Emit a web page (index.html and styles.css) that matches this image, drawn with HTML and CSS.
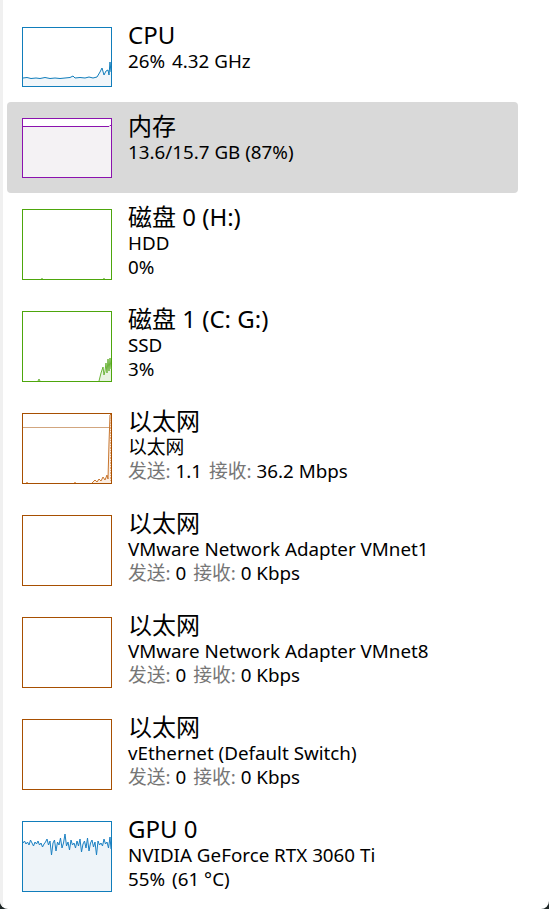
FILE: index.html
```html
<!DOCTYPE html>
<html lang="zh-CN">
<head>
<meta charset="utf-8">
<title>性能</title>
<link rel="stylesheet" href="styles.css">
</head>
<body>
<div class="window">
  <div class="edge"></div>
  <ul class="list">
    <li class="item">
      <svg class="graph short" viewBox="0 0 90 60" width="90" height="60">
        <rect x="0.5" y="0.5" width="89" height="59" fill="#fff" stroke="#117dbb"/>
        <polygon fill="#f1f6fa" points="1,51 5,50.5 9,51.5 14,51 18,51.5 23,50.5 28,51.5 33,51 38,51.5 43,51 48,50.5 51,49 53,51 58,50.5 63,51 67,50 71,51 75,50 78,45 80,41 82,48 84,44 86,43 87,48 88,35 89,45 89,59 1,59"/>
        <polyline fill="none" stroke="#117dbb" stroke-width="1" points="1,51 5,50.5 9,51.5 14,51 18,51.5 23,50.5 28,51.5 33,51 38,51.5 43,51 48,50.5 51,49 53,51 58,50.5 63,51 67,50 71,51 75,50 78,45 80,41 82,48 84,44 86,43 87,48 88,35 89,45"/>
      </svg>
      <div class="info">
        <div class="title">CPU</div>
        <div class="sub"><span class="v">26%</span><span class="v">4.32 GHz</span></div>
      </div>
    </li>
    <li class="item selected">
      <svg class="graph short" viewBox="0 0 90 60" width="90" height="60">
        <rect x="0.5" y="0.5" width="89" height="59" fill="#fff" stroke="#8b12ae"/>
        <rect x="1" y="8.5" width="88" height="50.5" fill="#f4f2f4"/>
        <polyline fill="none" stroke="#8b12ae" stroke-width="1" points="1,8.5 87,8.5 88,7.5 89,7.5"/>
      </svg>
      <div class="info">
        <div class="title">内存</div>
        <div class="sub">13.6/15.7 GB (87%)</div>
      </div>
    </li>
    <li class="item">
      <svg class="graph" viewBox="0 0 90 71" width="90" height="71">
        <rect x="0.5" y="0.5" width="89" height="70" fill="#fff" stroke="#4da60c"/>
        <polyline fill="none" stroke="#9ccd7a" stroke-width="1" points="19,70 20,69 21,70"/>
        <polyline fill="none" stroke="#9ccd7a" stroke-width="1" points="81,70 82,69 83,70"/>
      </svg>
      <div class="info">
        <div class="title">磁盘 0 (H:)</div>
        <div class="sub">HDD</div>
        <div class="sub">0%</div>
      </div>
    </li>
    <li class="item">
      <svg class="graph" viewBox="0 0 90 71" width="90" height="71">
        <rect x="0.5" y="0.5" width="89" height="70" fill="#fff" stroke="#4da60c"/>
        <polygon fill="#e8f3e0" points="16,70 17,68 18,70 77,70 79,62 81,56 82,64 83,60 84,52 85,62 86,48 87,60 88,47 89,58 89,70"/>
        <polyline fill="none" stroke="#6cb43a" stroke-width="1" points="16,70 17,68 18,70"/>
        <polyline fill="none" stroke="#6cb43a" stroke-width="1" points="77,70 79,62 81,56 82,64 83,60 84,52 85,62 86,48 87,60 88,47 89,58"/>
      </svg>
      <div class="info">
        <div class="title">磁盘 1 (C: G:)</div>
        <div class="sub">SSD</div>
        <div class="sub">3%</div>
      </div>
    </li>
    <li class="item">
      <svg class="graph" viewBox="0 0 90 71" width="90" height="71">
        <rect x="0.5" y="0.5" width="89" height="70" fill="#fff" stroke="#a74f01"/>
        <line x1="1" y1="14.5" x2="89" y2="14.5" stroke="#d2a67f" stroke-width="1"/>
        <polygon fill="#fbeee3" points="70,70 73,67 75,69 77,66 79,68 81,64 83,67 85,62 86,66 87,30 88,2 89,1 89,70"/>
        <polyline fill="none" stroke="#e3a36a" stroke-width="1" points="4,70 5,69 6,70"/>
        <polyline fill="none" stroke="#e3a36a" stroke-width="1" points="52,70 53,69 54,70"/>
        <polyline fill="none" stroke="#c8762f" stroke-width="1" points="70,70 73,67 75,69 77,66 79,68 81,64 83,67 85,62 86,66 87,30 88,2 89,1"/>
        <line x1="88.5" y1="4" x2="88.5" y2="68" stroke="#e9b07d" stroke-width="1" stroke-dasharray="1.5 1"/>
      </svg>
      <div class="info">
        <div class="title">以太网</div>
        <div class="sub">以太网</div>
        <div class="sub"><span class="label">发送:</span> <span class="v">1.1</span><span class="label">接收:</span> 36.2 Mbps</div>
      </div>
    </li>
    <li class="item">
      <svg class="graph" viewBox="0 0 90 71" width="90" height="71">
        <rect x="0.5" y="0.5" width="89" height="70" fill="#fff" stroke="#a74f01"/>
      </svg>
      <div class="info">
        <div class="title">以太网</div>
        <div class="sub">VMware Network Adapter VMnet1</div>
        <div class="sub"><span class="label">发送:</span> <span class="v">0</span><span class="label">接收:</span> 0 Kbps</div>
      </div>
    </li>
    <li class="item">
      <svg class="graph" viewBox="0 0 90 71" width="90" height="71">
        <rect x="0.5" y="0.5" width="89" height="70" fill="#fff" stroke="#a74f01"/>
      </svg>
      <div class="info">
        <div class="title">以太网</div>
        <div class="sub">VMware Network Adapter VMnet8</div>
        <div class="sub"><span class="label">发送:</span> <span class="v">0</span><span class="label">接收:</span> 0 Kbps</div>
      </div>
    </li>
    <li class="item">
      <svg class="graph" viewBox="0 0 90 71" width="90" height="71">
        <rect x="0.5" y="0.5" width="89" height="70" fill="#fff" stroke="#a74f01"/>
      </svg>
      <div class="info">
        <div class="title">以太网</div>
        <div class="sub">vEthernet (Default Switch)</div>
        <div class="sub"><span class="label">发送:</span> <span class="v">0</span><span class="label">接收:</span> 0 Kbps</div>
      </div>
    </li>
    <li class="item">
      <svg class="graph" viewBox="0 0 90 71" width="90" height="71">
        <rect x="0.5" y="0.5" width="89" height="70" fill="#fff" stroke="#117dbb"/>
        <polygon fill="#eef4f9" points="1,22 2.5,20 4,23 5.5,21 7,24 8.5,19 10,22 11.5,25 13,21 14.5,23 16,20 17.5,24 19,22 20.5,26 22,23 23.5,21 25,18 26.5,24 28,20 29.5,34 31,22 32.5,19 34,30 35.5,21 37,24 38.5,17 40,27 41.5,22 43,13 44.5,25 46,21 47.5,29 49,19 50.5,24 52,22 53.5,27 55,20 56.5,25 58,18 59.5,31 61,23 62.5,20 64,27 65.5,17 67,30 68.5,22 70,19 71.5,26 73,21 74.5,34 76,20 77.5,24 79,22 80.5,25 82,18 83.5,23 85,21 86.5,27 88,16 89,28 89,70 1,70"/>
        <polyline fill="none" stroke="#1b80c2" stroke-width="1" points="1,22 2.5,20 4,23 5.5,21 7,24 8.5,19 10,22 11.5,25 13,21 14.5,23 16,20 17.5,24 19,22 20.5,26 22,23 23.5,21 25,18 26.5,24 28,20 29.5,34 31,22 32.5,19 34,30 35.5,21 37,24 38.5,17 40,27 41.5,22 43,13 44.5,25 46,21 47.5,29 49,19 50.5,24 52,22 53.5,27 55,20 56.5,25 58,18 59.5,31 61,23 62.5,20 64,27 65.5,17 67,30 68.5,22 70,19 71.5,26 73,21 74.5,34 76,20 77.5,24 79,22 80.5,25 82,18 83.5,23 85,21 86.5,27 88,16 89,28"/>
      </svg>
      <div class="info">
        <div class="title">GPU 0</div>
        <div class="sub">NVIDIA GeForce RTX 3060 Ti</div>
        <div class="sub"><span class="v">55%</span>(61 °C)</div>
      </div>
    </li>
  </ul>
</div>
</body>
</html>
```

FILE: styles.css
```css
html, body {
  margin: 0;
  padding: 0;
  background: #1d2626;
}

body {
  width: 549px;
  height: 909px;
  overflow: hidden;
  font-family: "Noto Sans", "Noto Sans CJK SC", sans-serif;
  color: #000;
}

.window {
  display: flex;
  width: 549px;
  height: 909px;
  background: #fff;
  border-radius: 0 0 8px 8px;
  overflow: hidden;
}

.edge {
  width: 3px;
  flex: none;
  background: #f0f0f0;
}

.list {
  list-style: none;
  margin: 0;
  padding: 11px 0 0 4px;
  width: 511px;
}

.item {
  display: flex;
  align-items: flex-start;
  gap: 16px;
  padding: 16px 0 15px 15px;
  border-radius: 4px;
}

.item.selected {
  background: #d9d9d9;
}

.graph {
  display: block;
  flex: none;
  shape-rendering: crispEdges;
}

.graph polyline,
.graph polygon {
  shape-rendering: auto;
}

.info {
  margin-top: -5px;
}

.title {
  font-size: 24px;
  line-height: 26px;
  margin-bottom: 1px;
  white-space: nowrap;
}

.sub {
  font-size: 18.8px;
  line-height: 24px;
  white-space: nowrap;
}

.v {
  margin-right: 7px;
}

.label {
  color: #767676;
}
```
